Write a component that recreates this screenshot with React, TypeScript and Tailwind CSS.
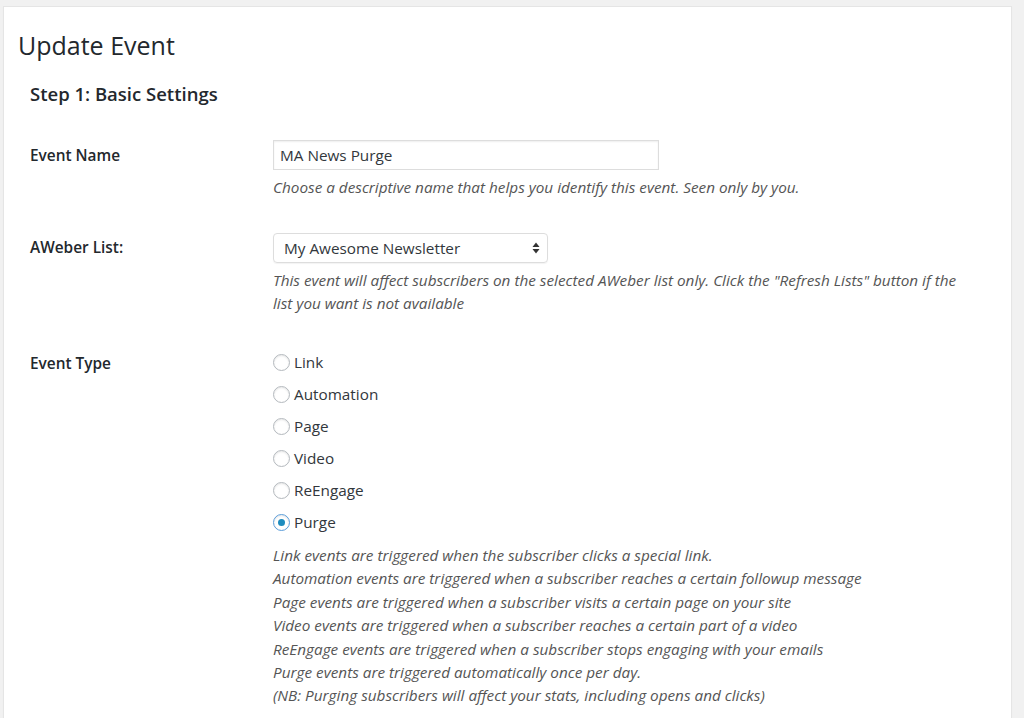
import React from "react";

const font = { fontFamily: '"Open Sans", "Noto Sans", sans-serif' };

function Radio({ label, checked }: { label: string; checked?: boolean }) {
  return (
    <label className="flex items-center h-[32px] text-[15.3px] text-[#32373c]">
      <span
        className={
          "w-[17px] h-[17px] rounded-full border flex items-center justify-center shrink-0 bg-white shadow-[inset_0_1px_2px_rgba(0,0,0,0.1)] " +
          (checked ? "border-[#5b9dd9] shadow-[0_0_2px_rgba(30,140,190,0.8)]" : "border-[#b4b9be]")
        }
      >
        {checked && <span className="w-[7px] h-[7px] rounded-full bg-[#1e8cbe]" />}
      </span>
      <span className="ml-[4px]">{label}</span>
    </label>
  );
}

export default function App() {
  return (
    <div style={font} className="bg-[#f1f1f1] w-[1024px] h-[718px] overflow-hidden pt-[6px] pl-[3px]">
      <div className="bg-white w-[1009px] h-[740px] border-l border-t border-r border-[#e5e5e5] shadow-[0_1px_1px_rgba(0,0,0,0.04)]">
        <h1 className="mt-[22px] pl-[14px] text-[25px] leading-[32px] font-normal text-[#23282d]">Update Event</h1>
        <h2 className="mt-[21px] pl-[26px] text-[18.5px] leading-[24px] font-semibold text-[#23282d]">Step 1: Basic Settings</h2>

        <div className="grid grid-cols-[243px_1fr] pl-[26px] mt-[34px] text-[#23282d]">
          {/* Event Name */}
          <div className="text-[15.4px] font-semibold leading-[32px]">Event Name</div>
          <div>
            <div className="w-[386px] h-[30px] border border-[#ddd] shadow-[inset_0_1px_2px_rgba(0,0,0,0.07)] flex items-center pl-[6px] text-[15.3px] text-[#32373c]">
              MA News Purge
            </div>
            <p className="mt-[6px] text-[15.3px] leading-[23px] italic text-[#555]">
              Choose a descriptive name that helps you identify this event. Seen only by you.
            </p>
          </div>

          {/* AWeber List */}
          <div className="mt-[34px] text-[15.4px] font-semibold leading-[30px]">AWeber List:</div>
          <div className="mt-[34px]">
            <div className="w-[275px] h-[30px] border border-[#ddd] rounded-[4px] shadow-[0_1px_1px_rgba(0,0,0,0.05)] flex items-center justify-between pl-[10px] pr-[6px] text-[15.3px] text-[#32373c]">
              <span>My Awesome Newsletter</span>
              <svg width="8" height="12" viewBox="0 0 8 12" className="mr-[1px]">
                <path d="M4 0.5 L7.5 5 L0.5 5 Z" fill="#333" />
                <path d="M4 11.5 L7.5 7 L0.5 7 Z" fill="#333" />
              </svg>
            </div>
            <p className="mt-[6px] w-[700px] text-[15.3px] leading-[23px] italic text-[#555]">
              This event will affect subscribers on the selected AWeber list only. Click the "Refresh Lists" button if the list you want is not available
            </p>
          </div>

          {/* Event Type */}
          <div className="mt-[31px] text-[15.4px] font-semibold leading-[36px]">Event Type</div>
          <div className="mt-[31px]">
            <Radio label="Link" />
            <Radio label="Automation" />
            <Radio label="Page" />
            <Radio label="Video" />
            <Radio label="ReEngage" />
            <Radio label="Purge" checked />
            <div className="mt-[6px] text-[15.3px] leading-[23.4px] italic text-[#555]">
              <div>Link events are triggered when the subscriber clicks a special link.</div>
              <div>Automation events are triggered when a subscriber reaches a certain followup message</div>
              <div>Page events are triggered when a subscriber visits a certain page on your site</div>
              <div>Video events are triggered when a subscriber reaches a certain part of a video</div>
              <div>ReEngage events are triggered when a subscriber stops engaging with your emails</div>
              <div>Purge events are triggered automatically once per day.</div>
              <div>(NB: Purging subscribers will affect your stats, including opens and clicks)</div>
            </div>
          </div>
        </div>
      </div>
    </div>
  );
}
